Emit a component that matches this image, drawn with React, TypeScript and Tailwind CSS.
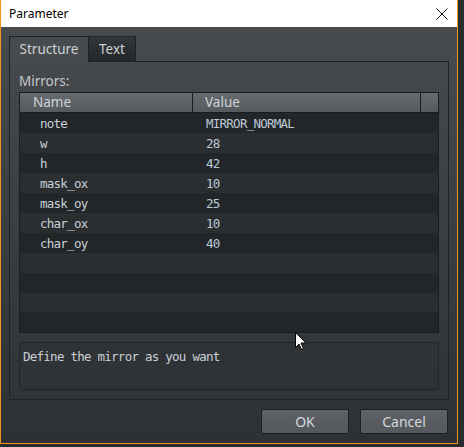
import React from 'react';

const rows: [string, string][] = [
  ['note', 'MIRROR_NORMAL'],
  ['w', '28'],
  ['h', '42'],
  ['mask_ox', '10'],
  ['mask_oy', '25'],
  ['char_ox', '10'],
  ['char_oy', '40'],
  ['', ''],
  ['', ''],
  ['', ''],
  ['', ''],
];

const sans = "font-['Noto_Sans',sans-serif]";
const mono = "font-['DejaVu_Sans_Mono',monospace]";

export default function App() {
  return (
    <div className="relative h-[447px] w-[464px] bg-[#2a2b2c]">
      <div className="flex h-[444px] w-[458px] flex-col border-x border-b border-[#f39320]">
        {/* title bar */}
        <div className="flex h-[27px] items-center justify-between bg-white pl-[8px] pr-[9px]">
          <span className={`${sans} text-[12px] text-black`}>Parameter</span>
          <svg width="12" height="12" viewBox="0 0 12 12">
            <path d="M0.5 0.5 L11.5 11.5 M11.5 0.5 L0.5 11.5" stroke="#111" strokeWidth="1" />
          </svg>
        </div>

        <div className="flex flex-1 flex-col bg-gradient-to-b from-[#474b4e] to-[#2e3134] px-[8px] pt-[9px]">
          {/* tabs */}
          <div className={`${sans} flex h-[25px] text-[13.5px]`}>
            <div className="relative z-10 -mb-px flex w-[80px] items-center justify-center border-x border-t border-[#1f2225] bg-[#474b4e] text-[#cdd1d5]">
              Structure
            </div>
            <div className="flex w-[47px] items-center justify-center border-r border-t border-[#1f2225] bg-gradient-to-b from-[#33373a] to-[#25282b] text-[#cdd1d5]">
              Text
            </div>
          </div>

          {/* panel */}
          <div className="flex h-[339px] w-[440px] flex-col border border-[#1f2225] px-[9px]">
            <div className={`${sans} flex h-[30px] items-end pb-[1px] text-[13.5px] text-[#c4c8cc]`}>Mirrors:</div>

            <div className="flex h-[241px] flex-col border border-[#1a1d20] bg-[#25282b]">
              <div className={`${sans} flex h-[20px] border-b border-[#1a1d20] bg-gradient-to-b from-[#666b6f] to-[#565a5e] text-[13.5px] text-[#d0d4d8]`}>
                <div className="flex w-[173px] items-center border-r border-[#1a1d20] pl-[13px]">Name</div>
                <div className="flex w-[228px] items-center border-r border-[#1a1d20] pl-[12px]">Value</div>
                <div className="flex-1" />
              </div>
              {rows.map(([name, value], i) => (
                <div
                  key={i}
                  className={`${mono} flex h-[20px] items-center pt-[2px] text-[12.5px] tracking-[-0.75px] ${
                    i % 2 === 0 ? 'bg-[#232629]' : 'bg-[#2b2e31]'
                  }`}
                >
                  <div className="w-[174px] pl-[20px] text-[#c8d0d6]">{name}</div>
                  <div className="pl-[12px] text-[#bccad6]">{value}</div>
                </div>
              ))}
            </div>

            <div
              className={`${mono} mt-[9px] h-[48px] rounded-[3px] border border-[#222528] bg-[#303336] px-[3px] pt-[6px] text-[12.5px] leading-[16px] tracking-[-0.75px] text-[#c8d0d6]`}
            >
              Define the mirror as you want
            </div>
          </div>

          {/* buttons */}
          <div className={`${sans} mt-[9px] flex justify-end gap-[11px] pr-[1px] text-[14px]`}>
            <button className="h-[25px] w-[88px] rounded-[2px] border border-[#1e2124] bg-gradient-to-b from-[#5e6266] to-[#54585c] text-[#d4d8dc]">
              OK
            </button>
            <button className="h-[25px] w-[88px] rounded-[2px] border border-[#1e2124] bg-gradient-to-b from-[#5e6266] to-[#54585c] text-[#d4d8dc]">
              Cancel
            </button>
          </div>
        </div>
      </div>

      {/* mouse cursor */}
      <svg className="absolute left-[295px] top-[332px]" width="12" height="19" viewBox="0 0 12 19">
        <path d="M0.5 0.5 L0.5 15.5 L4 12 L6.5 17.5 L8.5 16.5 L6 11 L11 11 Z" fill="white" stroke="black" strokeWidth="1" />
      </svg>
    </div>
  );
}
